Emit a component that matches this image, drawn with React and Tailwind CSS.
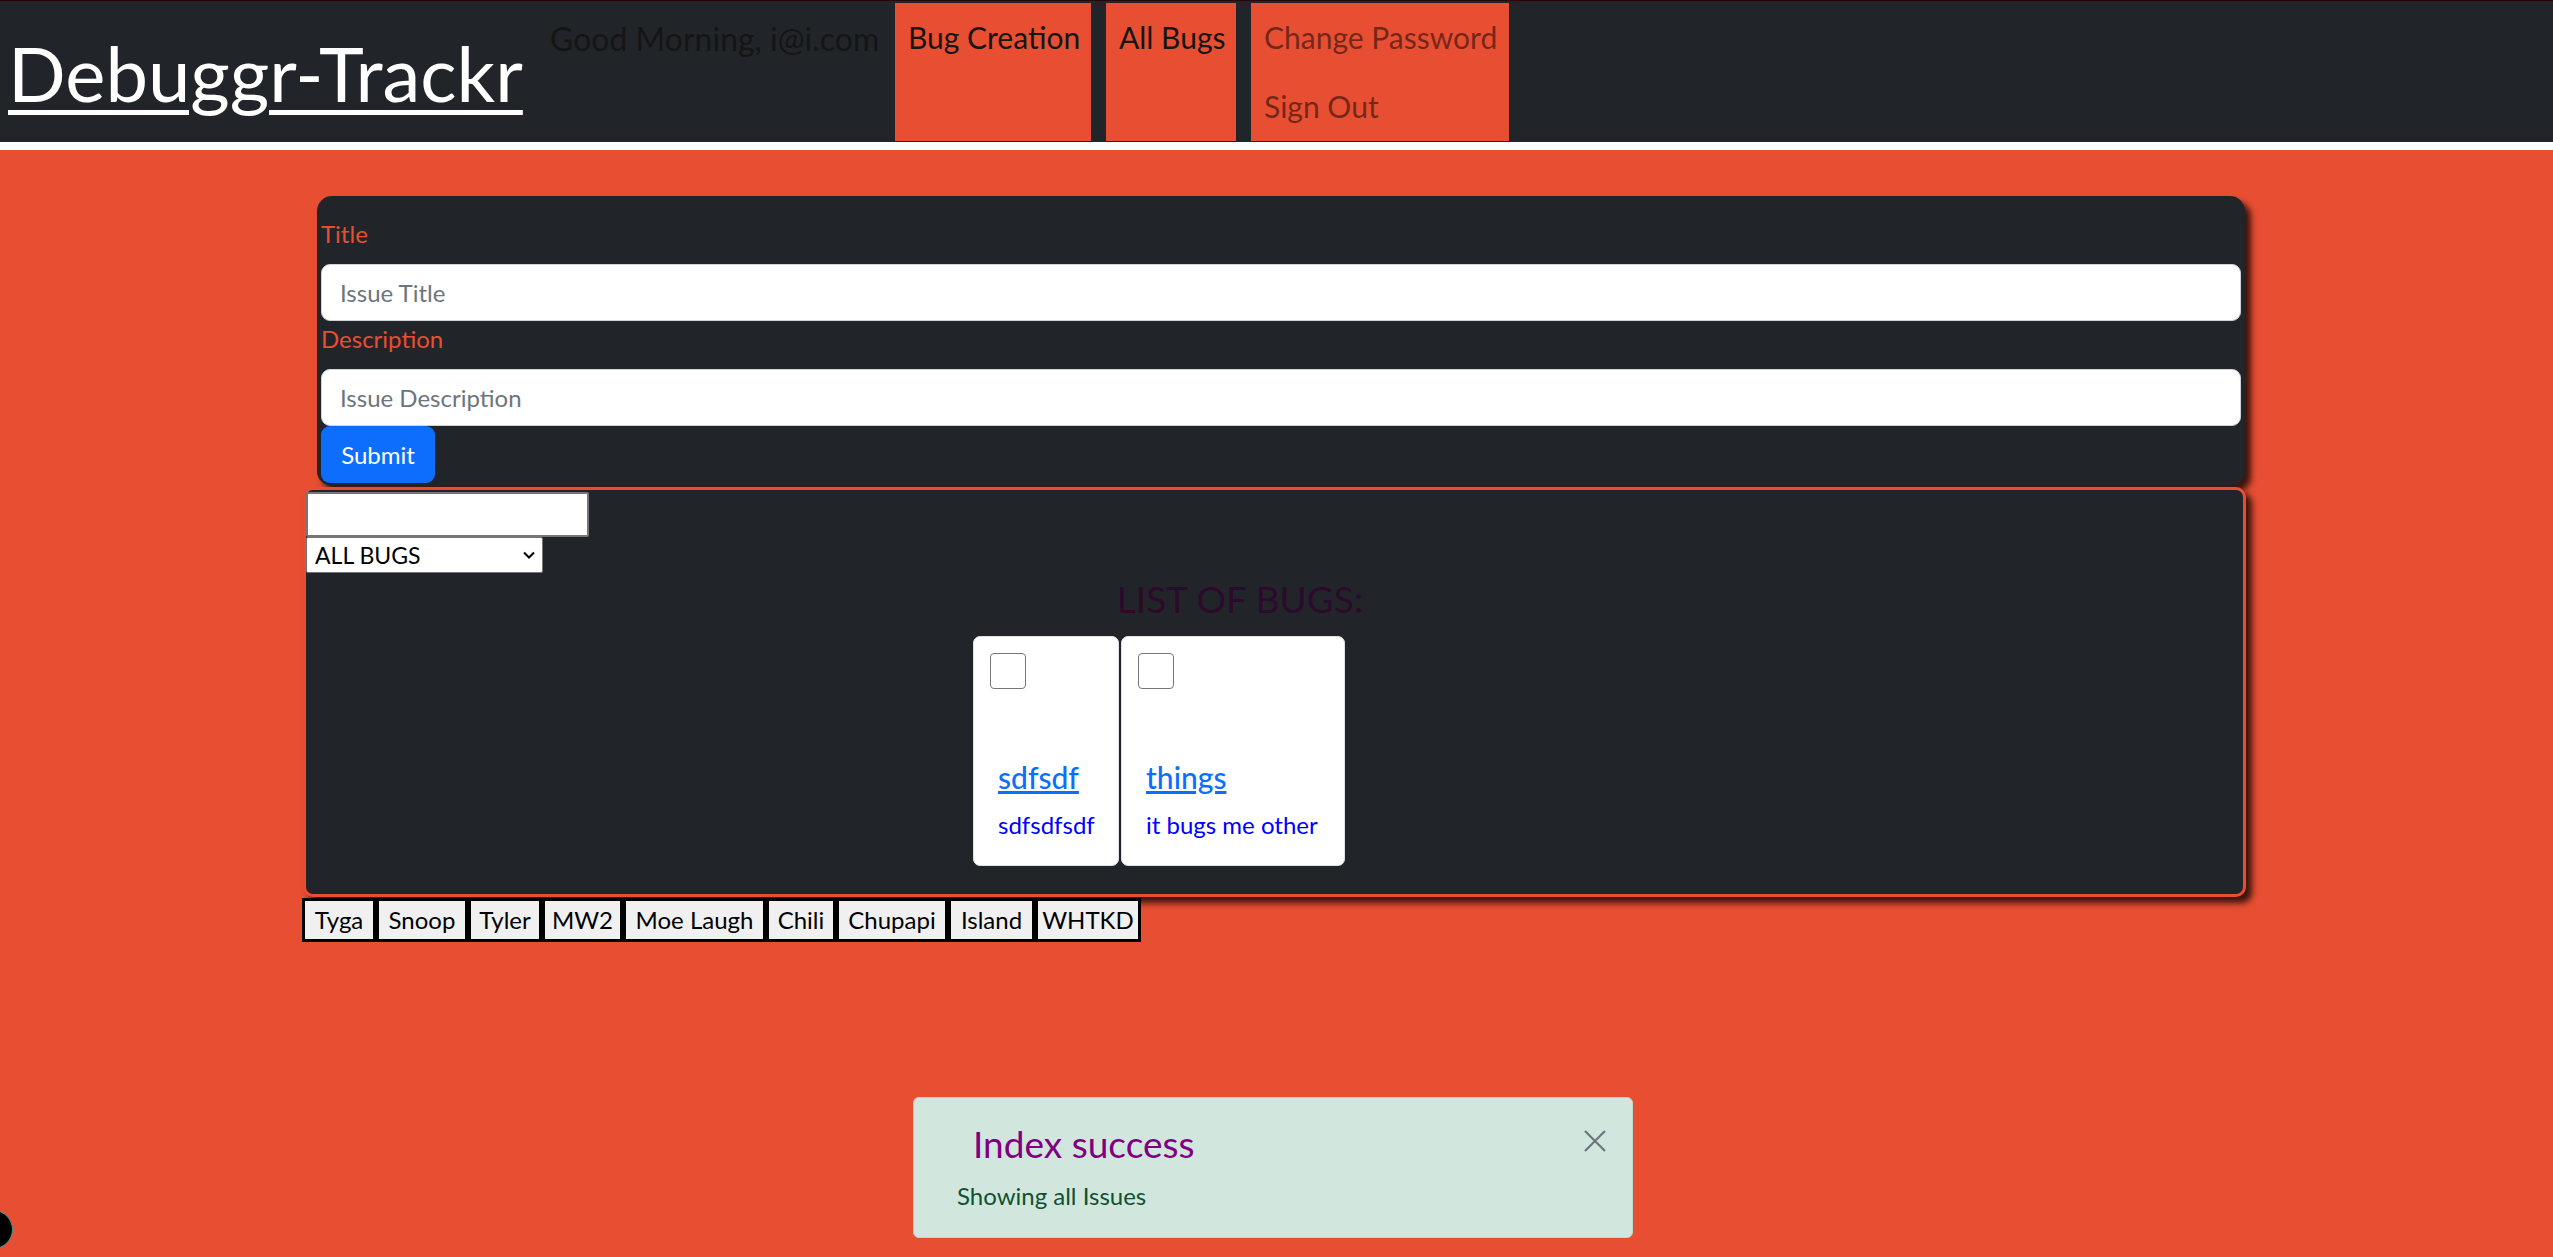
import React from "react";

const songs = [
  { name: "Tyga", w: "w-[74px]" },
  { name: "Snoop", w: "w-[92px]" },
  { name: "Tyler", w: "w-[74px]" },
  { name: "MW2", w: "w-[81px]" },
  { name: "Moe Laugh", w: "w-[143px]" },
  { name: "Chili", w: "w-[70px]" },
  { name: "Chupapi", w: "w-[112px]" },
  { name: "Island", w: "w-[87px]" },
  { name: "WHTKD", w: "w-[106px]" },
];

const bugs = [
  { title: "sdfsdf", text: "sdfsdfsdf", w: "w-[146px]" },
  { title: "things", text: "it bugs me other", w: "w-[224px]" },
];

const Header = () => (
  <header className="flex items-start h-[150px] bg-[#212529] border-t border-t-[#2a0606] border-b-8 border-b-white">
    {/* Brand */}
    <div className="w-[550px] pl-[8px] shrink-0">
      <a href="#" className="block mt-[34px] text-[76px] leading-none text-white underline decoration-[5px] underline-offset-[8px]">
        Debuggr-Trackr
      </a>
    </div>

    {/* Greeting */}
    <div className="w-[345px] shrink-0 mt-[22px] text-[32px] leading-none text-[#151515] whitespace-nowrap">
      Good Morning, i@i.com
    </div>

    {/* Nav links */}
    <div className="w-[196px] h-[138px] mt-[2px] bg-[#e74e32] shrink-0">
      <a href="#" className="block pl-[13px] py-[12px] text-[30px] leading-[45px] text-[#151515]">
        Bug Creation
      </a>
    </div>
    <div className="w-[130px] h-[138px] mt-[2px] ml-[15px] bg-[#e74e32] shrink-0">
      <a href="#" className="block pl-[13px] py-[12px] text-[30px] leading-[45px] text-[#151515]">
        All Bugs
      </a>
    </div>
    <div className="w-[258px] h-[138px] mt-[2px] ml-[15px] bg-[#e74e32] shrink-0">
      <a href="#" className="block pl-[13px] py-[12px] text-[30px] leading-[45px] text-black/50">
        Change Password
      </a>
      <a href="#" className="block pl-[13px] py-[12px] text-[30px] leading-[45px] text-black/50">
        Sign Out
      </a>
    </div>
  </header>
);

const BugForm = () => (
  <form className="ml-[10px] mr-[1px] mt-[46px] pt-[20px] px-[4px] pb-[3px] bg-[#212529] rounded-[15px] shadow-[6px_6px_6px_rgba(0,0,0,0.75)]">
    <label className="block text-[24px] leading-[36px] text-[#e74e32] mb-[12px]">Title</label>
    <input
      type="text"
      placeholder="Issue Title"
      className="block w-full h-[57px] px-[18px] text-[24px] bg-white rounded-[9px] border-[1.5px] border-[#ced4da] placeholder:text-[#6c757d] outline-none"
    />
    <label className="block text-[24px] leading-[36px] text-[#e74e32] mb-[12px]">Description</label>
    <input
      type="text"
      placeholder="Issue Description"
      className="block w-full h-[57px] px-[18px] text-[24px] bg-white rounded-[9px] border-[1.5px] border-[#ced4da] placeholder:text-[#6c757d] outline-none"
    />
    <button type="button" className="w-[114px] h-[57px] bg-[#0d6efd] text-white text-[24px] rounded-[9px]">
      Submit
    </button>
  </form>
);

const BugCard = ({ bug }) => (
  <div className={`${bug.w} bg-white border border-[#dee2e6] rounded-[7px] pt-[16px] px-[24px] pb-[22px]`}>
    <input
      type="checkbox"
      className="block appearance-none w-[36px] h-[36px] -ml-[8px] bg-white border-[1.5px] border-[#767676] rounded-[4px]"
    />
    <a href="#" className="block mt-[70px] text-[30px] leading-[36px] font-medium text-[#0d6efd] underline whitespace-nowrap">
      {bug.title}
    </a>
    <p className="mt-[12px] text-[24px] leading-[36px] text-[#0000ff] whitespace-nowrap">{bug.text}</p>
  </div>
);

const BugList = () => (
  <div className="-ml-[4px] mt-[1px] h-[410px] bg-[#212529] border-[3px] border-[#e74e32] rounded-[10px] shadow-[6px_6px_6px_rgba(0,0,0,0.75)]">
    <input type="text" className="block mt-[2px] w-[283px] h-[45px] bg-white border-2 border-[#767676] rounded-[2px] outline-none" />
    <div className="relative w-[237px] h-[36px]">
      <select className="w-full h-full appearance-none bg-white border-[1.5px] border-[#767676] rounded-[2px] pl-[8px] text-[23px] text-black outline-none">
        <option>ALL BUGS</option>
      </select>
      <svg
        className="absolute right-[7px] top-[11px] pointer-events-none"
        width="14"
        height="14"
        viewBox="0 0 14 14"
        fill="none"
        stroke="black"
        strokeWidth="2"
      >
        <path d="M2 4.5 L7 9.5 L12 4.5" />
      </svg>
    </div>

    <h3 className="mt-[7px] pr-[69px] text-center text-[37px] leading-none text-[#2d0a2b]">LIST OF BUGS:</h3>

    <div className="flex justify-center gap-[2px] mt-[19px] pr-[231px]">
      {bugs.map((bug) => (
        <BugCard key={bug.title} bug={bug} />
      ))}
    </div>
  </div>
);

const Toast = () => (
  <div className="fixed bottom-[19px] left-[913px] w-[720px] h-[141px] bg-[#d1e7dd] border border-[#badbcc] rounded-[6px]">
    <div className="flex items-start justify-between pt-[27px] pl-[59px] pr-[25px]">
      <strong className="font-normal text-[37px] leading-none text-[#800080]">Index success</strong>
      <svg className="mt-[4px]" width="24" height="24" viewBox="0 0 24 24" fill="none" stroke="#6c757d" strokeWidth="2.2">
        <path d="M2 2 L22 22 M22 2 L2 22" />
      </svg>
    </div>
    <p className="mt-[22px] pl-[43px] text-[24px] leading-none text-[#0f5132]">Showing all Issues</p>
  </div>
);

export default function App() {
  return (
    <div className="relative min-h-screen overflow-hidden bg-[#e74e32] font-['Lato',sans-serif]">
      <Header />

      <main className="w-[1939px] mx-auto">
        <BugForm />
        <BugList />

        {/* Sound buttons */}
        <div className="flex -ml-[5px] mt-[1px]">
          {songs.map((s) => (
            <button
              key={s.name}
              type="button"
              className={`${s.w} h-[44px] bg-[#f0f0f0] border-[3px] border-black text-[24px] leading-none text-black`}
            >
              {s.name}
            </button>
          ))}
        </div>
      </main>

      <Toast />

      {/* devtools bubble */}
      <div className="fixed left-[-26px] bottom-[8px] w-[39px] h-[39px] rounded-full bg-black border border-[#3a9a9a]" />
    </div>
  );
}
